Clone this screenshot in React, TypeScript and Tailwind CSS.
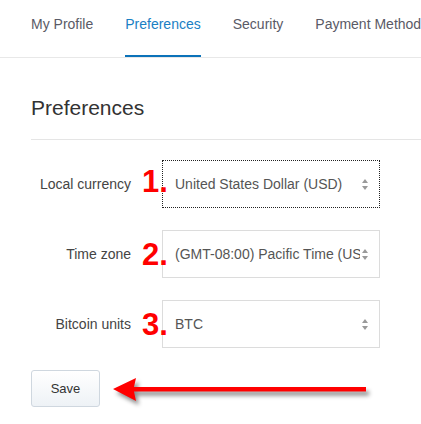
import React from 'react'

const tabs = ['My Profile', 'Preferences', 'Security', 'Payment Methods']

const rows = [
  { label: 'Local currency', value: 'United States Dollar (USD)', num: '1.', focused: true, numTop: 'top-[7px]' },
  { label: 'Time zone', value: '(GMT-08:00) Pacific Time (US & Canada)', num: '2.', focused: false, numTop: 'top-[10px]' },
  { label: 'Bitcoin units', value: 'BTC', num: '3.', focused: false, numTop: 'top-[10px]' },
]

const SelectArrows: React.FC = () => (
  <svg width="6" height="11" viewBox="0 0 6 11" className="shrink-0">
    <path d="M3 0 L6 4 L0 4 Z" fill="#9a9a9a" />
    <path d="M0 7 L6 7 L3 11 Z" fill="#9a9a9a" />
  </svg>
)

const App: React.FC = () => {
  return (
    <div className="w-[421px] h-[424px] overflow-hidden bg-white font-['Liberation_Sans',Arial,sans-serif]">
      {/* Tabs */}
      <nav className="flex h-[58px] gap-8 whitespace-nowrap border-b border-[#e8e8e8] pl-[31px]">
        {tabs.map((tab) => {
          const active = tab === 'Preferences'
          return (
            <div
              key={tab}
              className={`h-[57px] pt-[15px] text-[14px] leading-[18px] ${
                active ? 'border-b-2 border-[#0b72b9] text-[#1a80c4]' : 'text-[#5a5a66]'
              }`}
            >
              {tab}
            </div>
          )
        })}
      </nav>

      <div className="pl-[31px]">
        {/* Heading */}
        <div className="mt-[38px] border-b border-[#e5e5e5] pb-[19px]">
          <h2 className="text-[21px] leading-[24px] text-[#333]">Preferences</h2>
        </div>

        {/* Form rows */}
        <div className="mt-[20px] flex flex-col gap-[22px]">
          {rows.map((row) => (
            <div key={row.label} className="relative flex h-[48px] items-center">
              <label className="w-[100px] text-right text-[14px] text-[#444]">{row.label}</label>
              <div
                className={`ml-[31px] flex h-[48px] w-[218px] items-center justify-between bg-white pl-[12px] pr-[11px] ${
                  row.focused ? 'border border-dotted border-[#222]' : 'border border-[#dcdcdc]'
                }`}
              >
                <span className="w-[185px] overflow-hidden whitespace-nowrap text-[14px] text-[#555]">
                  {row.value}
                </span>
                <SelectArrows />
              </div>
              <span
                className={`absolute left-[111px] ${row.numTop} text-[31px] font-bold leading-[30px] text-[#ff0000]`}
              >
                {row.num}
              </span>
            </div>
          ))}
        </div>

        {/* Save */}
        <div className="relative mt-[22px] h-[37px]">
          <button className="h-[37px] w-[69px] rounded-[3px] border border-[#cfd7df] bg-gradient-to-b from-white to-[#eef2f6] text-[13px] text-[#333]">
            Save
          </button>
          <svg
            width="262"
            height="30"
            viewBox="0 0 262 30"
            className="absolute left-[79px] top-[6px] drop-shadow-[3px_4px_2px_rgba(0,0,0,0.45)]"
          >
            <path d="M3 13 L26 2 L24 11 L256 11 L256 15.5 L24 15.5 L26 25 Z" fill="#ff0000" />
          </svg>
        </div>
      </div>
    </div>
  )
}

export default App
